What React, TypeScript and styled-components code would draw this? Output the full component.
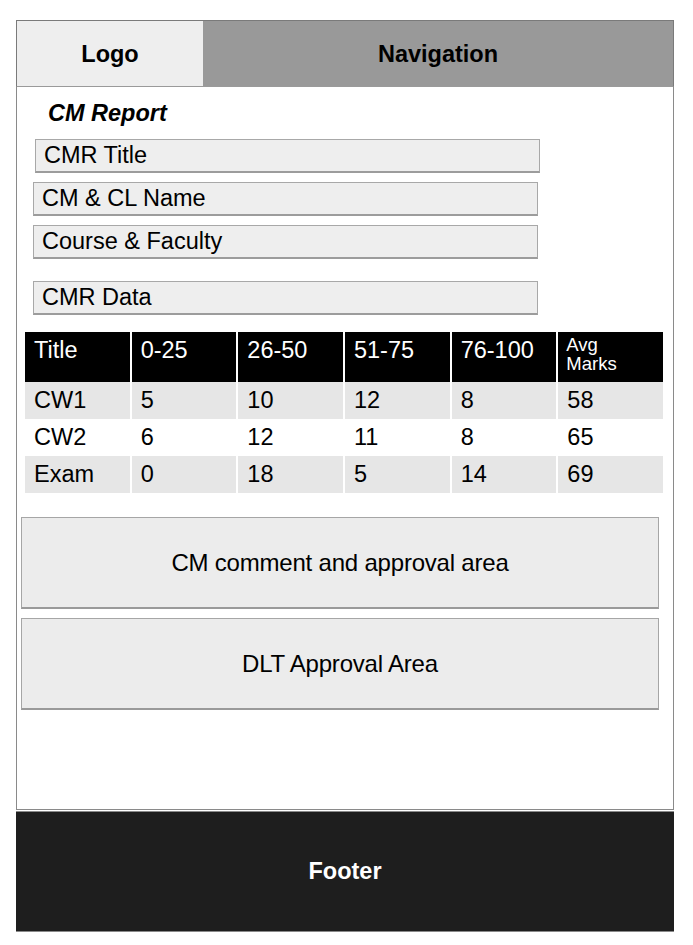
import React from 'react';
import styled, { createGlobalStyle } from 'styled-components';

const GlobalStyle = createGlobalStyle`
  html, body {
    margin: 0;
    padding: 0;
    background: #ffffff;
    font-family: "Liberation Sans", Arial, sans-serif;
    color: #000;
  }
`;

const Page = styled.div`
  width: 658px;
  margin: 20px 0 0 16px;
  display: flex;
  flex-direction: column;
`;

const Header = styled.header`
  display: flex;
  height: 67px;
  border: 1px solid #7a7a7a;
  border-bottom-color: #9a9a9a;
  box-sizing: border-box;
`;

const HeaderCell = styled.div<{ $width?: number; $bg: string }>`
  ${({ $width }) => ($width ? `width: ${$width}px;` : 'flex: 1;')}
  background: ${({ $bg }) => $bg};
  display: flex;
  align-items: center;
  justify-content: center;
  padding-top: 2px;
  font-size: 23.5px;
  font-weight: bold;
`;

const Main = styled.main`
  height: 723px;
  box-sizing: border-box;
  border: 1px solid #8a8a8a;
  border-top: none;
  display: flex;
  flex-direction: column;
  padding: 13px 0 0 0;
`;

const ReportTitle = styled.h1`
  margin: 0 0 0 31px;
  font-size: 23.5px;
  font-weight: bold;
  font-style: italic;
  line-height: 27px;
`;

const FieldList = styled.div<{ $top: number }>`
  display: flex;
  flex-direction: column;
  gap: 9px;
  margin-top: ${({ $top }) => $top}px;
  padding-left: 16px;
`;

const Field = styled.div<{ $shift?: number }>`
  width: 505px;
  height: 34px;
  box-sizing: border-box;
  margin-left: ${({ $shift }) => $shift ?? 0}px;
  background: #eeeeee;
  border: 1px solid #a8a8a8;
  border-bottom: 2px solid #9c9c9c;
  padding-left: 8px;
  display: flex;
  align-items: center;
  font-size: 23.5px;
`;

const Table = styled.div`
  margin: 17px 0 0 8px;
  width: 638px;
  display: grid;
  grid-template-columns: repeat(6, 1fr);
  column-gap: 2px;
  background: #ffffff;
`;

const HeadCell = styled.div<{ $small?: boolean }>`
  background: #000000;
  color: #ffffff;
  height: 50px;
  box-sizing: border-box;
  padding: ${({ $small }) => ($small ? '3px 0 0 8px' : '5px 0 0 9px')};
  font-size: ${({ $small }) => ($small ? '18.5px' : '23.5px')};
  line-height: ${({ $small }) => ($small ? '19px' : '26px')};
`;

const BodyCell = styled.div<{ $shade: boolean }>`
  background: ${({ $shade }) => ($shade ? '#e6e6e6' : '#ffffff')};
  height: 37px;
  box-sizing: border-box;
  padding-left: 9px;
  display: flex;
  align-items: center;
  font-size: 23.5px;
`;

const AreaList = styled.div`
  margin: 24px 0 0 4px;
  display: flex;
  flex-direction: column;
  gap: 9px;
`;

const Area = styled.div`
  width: 638px;
  height: 92px;
  box-sizing: border-box;
  background: #ececec;
  border: 1px solid #a6a6a6;
  border-bottom: 2px solid #9a9a9a;
  display: flex;
  align-items: center;
  justify-content: center;
  font-size: 24px;
  letter-spacing: -0.2px;
`;

const Footer = styled.footer`
  margin-top: 1px;
  height: 121px;
  background: #1e1e1e;
  border-top: 1px solid #8a8a8a;
  border-bottom: 1px solid #8a8a8a;
  box-sizing: border-box;
  display: flex;
  align-items: center;
  justify-content: center;
  color: #ffffff;
  font-size: 23.5px;
  font-weight: bold;
`;

const columns = ['Title', '0-25', '26-50', '51-75', '76-100'];

const rows = [
  ['CW1', '5', '10', '12', '8', '58'],
  ['CW2', '6', '12', '11', '8', '65'],
  ['Exam', '0', '18', '5', '14', '69'],
];

export default function App() {
  return (
    <>
      <GlobalStyle />
      <Page>
        <Header>
          <HeaderCell $width={186} $bg="#eeeeee">Logo</HeaderCell>
          <HeaderCell $bg="#999999">Navigation</HeaderCell>
        </Header>
        <Main>
          <ReportTitle>CM Report</ReportTitle>
          <FieldList $top={12}>
            <Field $shift={2}>CMR Title</Field>
            <Field>CM &amp; CL Name</Field>
            <Field>Course &amp; Faculty</Field>
          </FieldList>
          <FieldList $top={22}>
            <Field>CMR Data</Field>
          </FieldList>
          <Table>
            {columns.map((c) => (
              <HeadCell key={c}>{c}</HeadCell>
            ))}
            <HeadCell $small>
              Avg
              <br />
              Marks
            </HeadCell>
            {rows.map((row, i) =>
              row.map((v, j) => (
                <BodyCell key={`${i}-${j}`} $shade={i !== 1}>
                  {v}
                </BodyCell>
              ))
            )}
          </Table>
          <AreaList>
            <Area>CM comment and approval area</Area>
            <Area>DLT Approval Area</Area>
          </AreaList>
        </Main>
        <Footer>Footer</Footer>
      </Page>
    </>
  );
}
